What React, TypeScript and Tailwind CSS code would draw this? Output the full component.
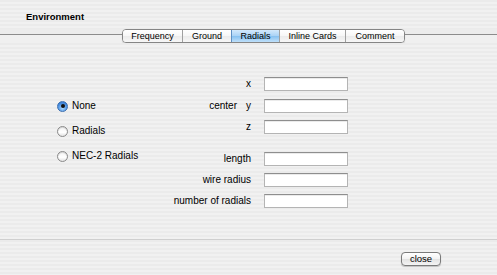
const tabs = [
  { label: 'Frequency', w: 'w-[59px]' },
  { label: 'Ground', w: 'w-[49px]' },
  { label: 'Radials', w: 'w-[48px]', active: true },
  { label: 'Inline Cards', w: 'w-[66px]' },
  { label: 'Comment', w: 'w-[59px]' },
]

const stripes =
  'bg-[repeating-linear-gradient(to_bottom,#ebebeb_0px,#ebebeb_2px,#f1f1f1_2px,#f1f1f1_4px)]'

function Radio({ label, checked }: { label: string; checked?: boolean }) {
  return (
    <div className="flex items-center h-[12px]">
      {checked ? (
        <span className="w-[11px] h-[11px] rounded-full border border-[#3b6fb0] bg-[radial-gradient(circle_at_50%_70%,#a9d8ff_0%,#4a90e2_60%,#2f6cc0_100%)] flex items-center justify-center">
          <span className="w-[4px] h-[4px] rounded-full bg-[#111]" />
        </span>
      ) : (
        <span className="w-[11px] h-[11px] rounded-full border border-[#8a8a8a] bg-[linear-gradient(to_bottom,#f4f4f4,#ffffff_60%,#e2e2e2)] shadow-[inset_0_1px_1px_rgba(0,0,0,0.15)]" />
      )}
      <span className="ml-[4px] text-[10px] leading-[12px]">{label}</span>
    </div>
  )
}

function Field({ label, prefix, mt }: { label: string; prefix?: string; mt: string }) {
  return (
    <div className={`flex items-center h-[14px] ${mt}`}>
      <div className="w-[91px] flex justify-end items-center text-[10px] leading-[12px]">
        {prefix && <span className="mr-[9px]">{prefix}</span>}
        <span>{label}</span>
      </div>
      <div className="ml-[13px] w-[84px] h-[14px] bg-white border border-[#b4b4b4] border-t-[#8e8e8e] shadow-[inset_0_1px_0_rgba(0,0,0,0.08)]" />
    </div>
  )
}

export default function App() {
  return (
    <div
      className="w-[497px] h-[275px] flex flex-col text-black bg-[#e9e9e9] overflow-hidden"
      style={{ fontFamily: '"Liberation Sans", Arial, sans-serif' }}
    >
      <div className={`h-[29px] pl-[26px] pt-[11px] ${stripes}`}>
        <span className="font-bold text-[9.5px] leading-[12px] block">Environment</span>
      </div>

      <div className="flex h-[14px] bg-[linear-gradient(to_bottom,#ececec_0px,#ececec_5px,#f0f0f0_6px)]">
        <div className="w-[122px] h-px mt-[5px] bg-[#8c8c8c]" />
        <div className="flex border border-[#858585] rounded-[4px] overflow-hidden shadow-[0_1px_1px_rgba(0,0,0,0.15)]">
          {tabs.map((t, i) => (
            <div
              key={t.label}
              className={`${t.w} h-full flex items-center justify-center text-[9px] leading-[12px] ${
                i > 0 ? 'border-l border-[#a0a0a0]' : ''
              } ${
                t.active
                  ? 'bg-[linear-gradient(to_bottom,#d3e9fc_0%,#a9d2f6_50%,#86c0f0_51%,#bfe0fa_100%)] border-l-[#5e8fc4]'
                  : 'bg-[linear-gradient(to_bottom,#ffffff_0%,#f6f6f6_50%,#ebebeb_51%,#f7f7f7_100%)]'
              }`}
            >
              {t.label}
            </div>
          ))}
        </div>
        <div className="flex-1 h-px mt-[5px] bg-[#8c8c8c]" />
      </div>

      <div className={`flex-1 flex ${stripes}`}>
        <div className="ml-[57px] w-[103px] shrink-0 mt-[57px] flex flex-col gap-[13px]">
          <Radio label="None" checked />
          <Radio label="Radials" />
          <Radio label="NEC-2 Radials" />
        </div>
        <div className="mt-[34px] flex flex-col">
          <Field label="x" mt="mt-0" />
          <Field label="y" prefix="center" mt="mt-[8px]" />
          <Field label="z" mt="mt-[7px]" />
          <Field label="length" mt="mt-[18px]" />
          <Field label="wire radius" mt="mt-[7px]" />
          <Field label="number of radials" mt="mt-[7px]" />
        </div>
      </div>

      <div className={`h-[36px] border-t border-[#cfcfcf] flex justify-end ${stripes}`}>
        <button className="mt-[12px] mr-[56px] w-[40px] h-[14px] rounded-[4px] border border-[#7a7a7a] bg-[linear-gradient(to_bottom,#ffffff_0%,#f2f2f2_50%,#e2e2e2_51%,#f4f4f4_100%)] shadow-[0_1px_1px_rgba(0,0,0,0.2)] text-[9.5px] leading-[12px] flex items-center justify-center">
          close
        </button>
      </div>
    </div>
  )
}
